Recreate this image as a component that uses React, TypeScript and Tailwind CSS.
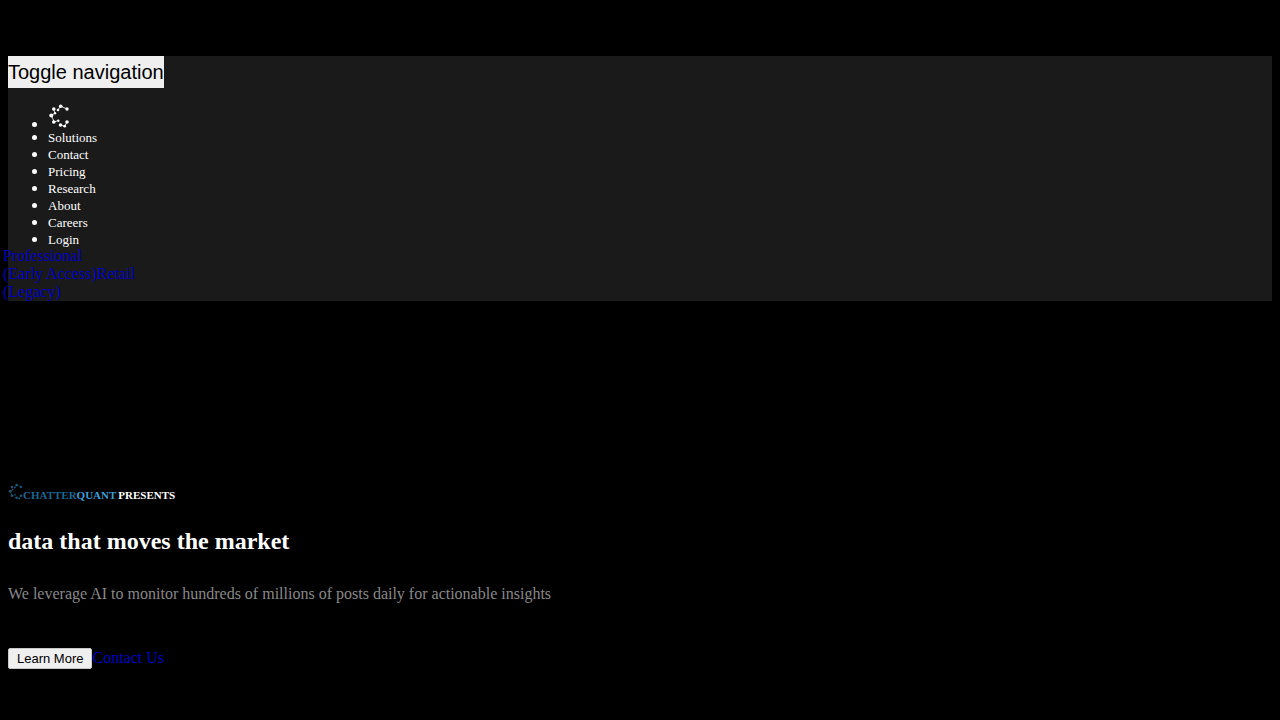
type NavItem = {
  label: string
  href: string
}

const navItems: NavItem[] = [
  { label: "Solutions", href: "#solutions" },
  { label: "Contact", href: "#contact" },
  { label: "Pricing", href: "#pricing" },
  { label: "Research", href: "#research" },
  { label: "About", href: "#about" },
  { label: "Careers", href: "#careers" },
  { label: "Login", href: "#login" },
]

// Ring of connected dots, open on the right
const LogoMark = ({ className }: { className: string }) => (
  <svg viewBox="0 0 22 25" className={className} fill="currentColor" aria-hidden="true">
    <path
      d="M19 5 12.700 2.200 9.800 6M5.800 5 6.800 9.200 3.300 11.500 6.300 18 10 16.500M12.300 21 16.700 22.200 19 18"
      fill="none"
      stroke="currentColor"
      strokeWidth="0.800"
    />
    <circle cx="19" cy="5" r="1.700" />
    <circle cx="12.700" cy="2.200" r="1.800" />
    <circle cx="10" cy="6" r="1.300" />
    <circle cx="5.800" cy="5" r="1.800" />
    <circle cx="7" cy="9.200" r="1.200" />
    <circle cx="3.300" cy="11.500" r="2" />
    <circle cx="5.800" cy="18" r="1.800" />
    <circle cx="10.300" cy="16.700" r="1.200" />
    <circle cx="12.500" cy="21" r="1.800" />
    <circle cx="16.700" cy="22.200" r="1.400" />
    <circle cx="19" cy="18" r="1.800" />
  </svg>
)

function Navbar() {
  return (
    <nav className="bg-[#1a1a1a]">
      <button type="button" className="block h-8 bg-[#efefef] font-['Liberation_Sans',sans-serif] text-xl text-black">
        Toggle navigation
      </button>
      <ul className="mt-4 list-disc pl-10 leading-4 text-white">
        <li className="leading-[10px]">
          <a href="#home" aria-label="ChatterQuant" className="inline-block">
            <LogoMark className="h-[25px] w-[22px]" />
          </a>
        </li>
        {navItems.map((item) => (
          <li key={item.label}>
            <a href={item.href} className="text-[13px] leading-[17px]">
              {item.label}
            </a>
          </li>
        ))}
      </ul>
      <div className="-mt-px -ml-[5px] leading-[18px] text-[#0000c0]">
        <a href="#professional">
          Professional
          <br />
          (Early Access)
        </a>
        <a href="#retail">
          Retail
          <br />
          (Legacy)
        </a>
      </div>
    </nav>
  )
}

function Hero() {
  return (
    <section className="mt-[182px]">
      <h6 className="flex items-end text-[11px] leading-3 font-bold text-white">
        <LogoMark className="h-[18px] w-[15px] text-[#1c5b7c]" />
        <span className="text-[#1c6794]">CHATTER</span>
        <span className="text-[#3c9fd8]">QUANT</span>
        <span className="ml-0.5">PRESENTS</span>
      </h6>
      <h1 className="mt-[26px] text-2xl leading-7 font-bold text-white">data that moves the market</h1>
      <p className="mt-[30px] leading-[18px] text-[#888888]">
        We leverage AI to monitor hundreds of millions of posts daily for actionable insights
      </p>
      <div className="mt-[45px] flex items-baseline">
        <button
          type="button"
          className="rounded-xs border border-[#c8c8c8] bg-[#efefef] px-2 py-px font-['Liberation_Sans',sans-serif] text-[13px] leading-[17px] text-black"
        >
          Learn More
        </button>
        <a href="#contact" className="leading-[18px] text-[#0000c0]">
          Contact Us
        </a>
      </div>
    </section>
  )
}

export default function App() {
  return (
    <main className="min-h-screen bg-black px-2 pt-14 font-['Liberation_Serif',serif] text-base">
      <Navbar />
      <Hero />
    </main>
  )
}
